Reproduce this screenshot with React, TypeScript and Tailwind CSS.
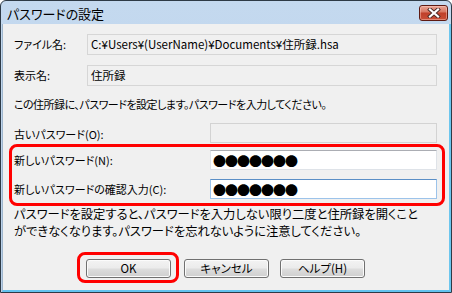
import React from 'react';

const jp = "font-['Noto_Sans_CJK_JP','Noto_Sans_CJK_SC',sans-serif] [font-feature-settings:'palt']";

const btn =
  "w-[85px] h-[19px] flex items-center justify-center text-[11.5px] text-black rounded-[3px] border border-[#707070] bg-[linear-gradient(to_bottom,#f3f3f3_0%,#ebebeb_48%,#dddddd_52%,#cfcfcf_100%)] shadow-[inset_0_0_0_1px_#fbfbfb]";

function CloseButton() {
  return (
    <div className="w-[29px] h-[16px] rounded-[3px] border border-[#5e1a12] bg-[linear-gradient(to_bottom,#eaa495_0%,#d97a66_40%,#c0402a_52%,#c94f37_100%)] shadow-[inset_0_0_0_1px_rgba(255,210,200,0.45)] flex items-center justify-center">
      <svg width="14" height="10" viewBox="0 0 14 10">
        <path d="M3 1.5 L11 8.5 M11 1.5 L3 8.5" stroke="#4a2a26" strokeWidth="4" strokeLinecap="square" />
        <path d="M3 1.5 L11 8.5 M11 1.5 L3 8.5" stroke="#ffffff" strokeWidth="2.2" strokeLinecap="square" />
      </svg>
    </div>
  );
}

export default function App() {
  return (
    <div className={`w-[452px] h-[293px] flex flex-col border border-[#2e3a46] rounded-t-[6px] bg-[linear-gradient(to_bottom,#c4d9ef,#b9d0e9)] overflow-hidden ${jp}`}>
      {/* Title bar */}
      <div className="shrink-0 h-[23px] flex items-center justify-between pl-[6px] pr-[3px] pt-[1px]">
        <span className="text-[13px] text-black leading-none">パスワードの設定</span>
        <CloseButton />
      </div>

      {/* Client area */}
      <div className="flex-1 min-h-0 ml-[1px] border-l border-l-[#9fb6cd] border-r-2 border-b-2 border-r-[#6cc6ee] border-b-[#62c2ee] bg-[#f0f0f0] pl-[11px] pr-[12px] pt-[10px] text-[11px] text-black">
        <div className="flex items-center">
          <span className="w-[73px]">ファイル名:</span>
          <div className="flex-1 h-[21px] border border-[#d6d6d6] bg-[#f0f0f0] flex items-center pl-[3px] text-[11.5px]">
            C:¥Users¥(UserName)¥Documents¥住所録.hsa
          </div>
        </div>

        <div className="flex items-center mt-[10px]">
          <span className="w-[73px]">表示名:</span>
          <div className="flex-1 h-[21px] border border-[#d6d6d6] bg-[#f0f0f0] flex items-center pl-[3px] text-[11.5px]">
            住所録
          </div>
        </div>

        <p className="mt-[10px] leading-[17px] tracking-[-0.5px]">
          この住所録に、パスワードを設定します。パスワードを入力してください。
        </p>

        <div className="flex items-center mt-[10px]">
          <span className="w-[196px] pt-[2px]">古いパスワード(O):</span>
          <div className="flex-1 h-[20px] border border-[#d3d3d3] bg-[#f0f0f0]" />
        </div>

        {/* Highlighted new password fields */}
        <div className="mt-[1px] -ml-[5px] -mr-[8px] border-[3px] border-[#ff0000] rounded-[8px] pl-[2px] pr-[5px] pt-[3px] pb-[4px]">
          <div className="flex items-center">
            <span className="w-[196px]">新しいパスワード(N):</span>
            <div className="flex-1 h-[20px] border border-[#dfe3e8] border-t-[#abadb3] bg-white flex items-center pl-[2px] text-[13px] leading-none tracking-[-1px]">
              ●●●●●●●
            </div>
          </div>
          <div className="flex items-center mt-[9px]">
            <span className="w-[196px]">新しいパスワードの確認入力(C):</span>
            <div className="flex-1 h-[20px] border border-[#9cc3ea] border-t-[#5b8fc6] bg-white flex items-center pl-[2px] text-[13px] leading-none tracking-[-1px]">
              ●●●●●●●
            </div>
          </div>
        </div>

        <p className="text-[12.3px] leading-[17px] whitespace-nowrap">
          パスワードを設定すると、パスワードを入力しない限り二度と住所録を開くこと
          <br />
          ができなくなります。パスワードを忘れないように注意してください。
        </p>

        <div className="flex items-start mt-[12px] ml-[63px]">
          <div className="border-[3px] border-[#ff0000] rounded-[8px] pl-[6px] pr-[5px] pt-[4px] pb-[2px]">
            <button className={btn}>OK</button>
          </div>
          <button className={`${btn} ml-[5px] mt-[7px]`}>キャンセル</button>
          <button className={`${btn} ml-[11px] mt-[7px]`}>ヘルプ(H)</button>
        </div>
      </div>
    </div>
  );
}
